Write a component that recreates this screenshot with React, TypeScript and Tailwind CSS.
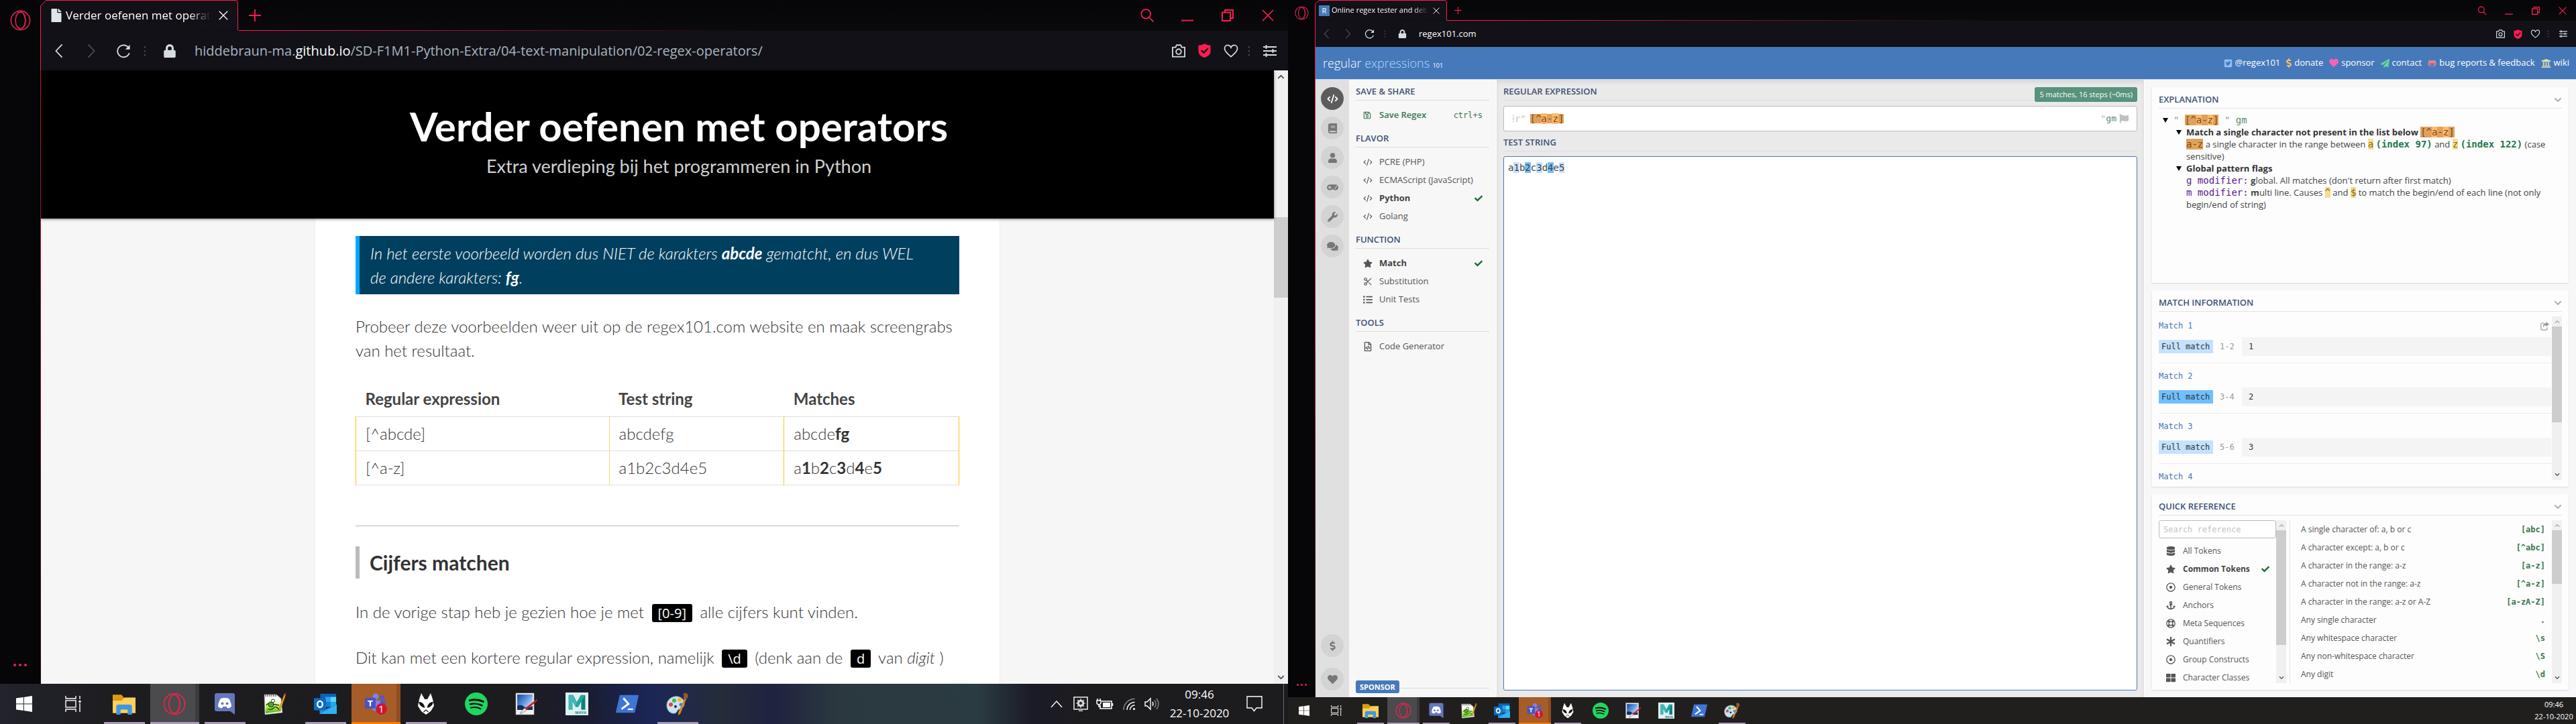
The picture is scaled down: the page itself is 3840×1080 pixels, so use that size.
import type { ReactNode } from "react";
import { CodeXml, Scissors } from "lucide-react";
import {
  FaAnchor,
  FaAsterisk,
  FaBook,
  FaCheck,
  FaChevronDown,
  FaComments,
  FaDatabase,
  FaDollarSign,
  FaFile,
  FaFlag,
  FaGamepad,
  FaGithubAlt,
  FaHeart,
  FaListUl,
  FaLock,
  FaPaperPlane,
  FaRegDotCircle,
  FaRegFileCode,
  FaRegLifeRing,
  FaRegSave,
  FaStar,
  FaThLarge,
  FaTwitterSquare,
  FaUniversity,
  FaUser,
  FaWrench,
} from "react-icons/fa";

/* ------------------------------------------------------------------ */
/* Icons                                                               */
/* ------------------------------------------------------------------ */

type IconProps = { className?: string };

function OperaIcon({ className = "" }: IconProps) {
  return (
    <svg viewBox="0 0 32 32" className={className} fill="none" stroke="#e3264f" strokeWidth="1.6">
      <circle cx="16" cy="16" r="14.6" />
      <ellipse cx="16" cy="16" rx="7.6" ry="12.8" />
      <path d="M19 4.2c6 4.5 6 19 0 23.6" />
    </svg>
  );
}

function SearchIcon({ className = "" }: IconProps) {
  return (
    <svg viewBox="0 0 24 24" className={className} fill="none" stroke="currentColor" strokeWidth="1.9">
      <circle cx="10" cy="9.5" r="7.5" />
      <path d="M15 15l7.5 7.5" />
    </svg>
  );
}

function MinimizeIcon({ className = "" }: IconProps) {
  return (
    <svg viewBox="0 0 18 18" className={className}>
      <rect x="0" y="15.6" width="18" height="1.9" fill="currentColor" />
    </svg>
  );
}

function RestoreIcon({ className = "" }: IconProps) {
  return (
    <svg viewBox="0 0 18 18" className={className} fill="none" stroke="currentColor" strokeWidth="2">
      <rect x="1" y="4.5" width="12" height="12.5" />
      <path d="M5 4.5V1h12v12h-4" />
    </svg>
  );
}

function CrossIcon({ className = "" }: IconProps) {
  return (
    <svg viewBox="0 0 18 18" className={className} fill="none" stroke="currentColor" strokeWidth="1.7">
      <path d="M1 1l16 16M17 1L1 17" />
    </svg>
  );
}

function PlusIcon({ className = "" }: IconProps) {
  return (
    <svg viewBox="0 0 18 18" className={className} fill="none" stroke="currentColor" strokeWidth="1.8">
      <path d="M9 0v18M0 9h18" />
    </svg>
  );
}

function BackIcon({ className = "" }: IconProps) {
  return (
    <svg viewBox="0 0 24 24" className={className} fill="none" stroke="currentColor" strokeWidth="1.9">
      <path d="M17 1.5L7 12l10 10.5" />
    </svg>
  );
}

function ForwardIcon({ className = "" }: IconProps) {
  return (
    <svg viewBox="0 0 24 24" className={className} fill="none" stroke="currentColor" strokeWidth="1.9">
      <path d="M7 1.5L17 12 7 22.5" />
    </svg>
  );
}

function ReloadIcon({ className = "" }: IconProps) {
  return (
    <svg viewBox="0 0 24 24" className={className} fill="none" stroke="currentColor" strokeWidth="2">
      <path d="M21.5 15.5A9.8 9.8 0 1 1 19 5.2L21 8" />
      <path d="M22.5 2v7.5H15z" fill="currentColor" stroke="none" />
    </svg>
  );
}

function DotsIcon({ className = "" }: IconProps) {
  return (
    <svg viewBox="0 0 4 16" className={className} fill="#4a4a52">
      <rect x="1" y="1" width="2" height="2.4" />
      <rect x="1" y="7" width="2" height="2.4" />
      <rect x="1" y="13" width="2" height="2.4" />
    </svg>
  );
}

function CameraIcon({ className = "" }: IconProps) {
  return (
    <svg viewBox="0 0 24 22" className={className} fill="none" stroke="currentColor" strokeWidth="2">
      <path d="M2 5h5l1.5-3.6h7L17 5h5v15.5H2z" strokeLinejoin="round" />
      <circle cx="12" cy="12.2" r="4.2" />
    </svg>
  );
}

function ShieldIcon({ className = "" }: IconProps) {
  return (
    <svg viewBox="0 0 20 22" className={className}>
      <path d="M10 0c2.5 2 6 2.7 9.5 2.7V12c0 5.5-5 8.5-9.5 10C5.5 20.5.5 17.5.5 12V2.7C4 2.700 7.5 2 10 0z" fill="#fa1e4e" />
      <path d="M5 10.500l3.800 3.800L15.500 7.500" fill="none" stroke="#121118" strokeWidth="2.4" />
    </svg>
  );
}

function HeartIcon({ className = "" }: IconProps) {
  return (
    <svg viewBox="0 0 24 22" className={className} fill="none" stroke="currentColor" strokeWidth="1.9">
      <path d="M12 20.5C7 16.500 1.500 12 1.500 7c0-3.300 2.300-5.500 5-5.500 2.500 0 4.500 1.500 5.500 4 1-2.500 3-4 5.500-4 2.700 0 5 2.200 5 5.500 0 5-5.500 9.500-10.500 13.500z" />
    </svg>
  );
}

function SlidersIcon({ className = "" }: IconProps) {
  return (
    <svg viewBox="0 0 20 18" className={className} fill="none" stroke="currentColor" strokeWidth="1.9">
      <path d="M0 3h20M0 9h20M0 15h20M4.500 0v6M14.500 6v6M4.500 12v6" />
    </svg>
  );
}

function ShareIcon({ className = "" }: IconProps) {
  return (
    <svg viewBox="0 0 16 16" className={className} fill="none" stroke="currentColor" strokeWidth="1.4">
      <path d="M7 2.500H3q-2 0-2 2V13q0 2 2 2h7.500q2 0 2-2v-2.500" />
      <path d="M10 0l6 4.500L10 9V6.500Q6 6 5 11 3.500 3 10 2.700z" fill="currentColor" stroke="none" />
    </svg>
  );
}

function TriangleIcon() {
  return (
    <svg viewBox="0 0 8 8" className="h-[18px] w-2 shrink-0">
      <path d="M0 1h8L4 8z" fill="#000" />
    </svg>
  );
}

function WindowsIcon({ className = "" }: IconProps) {
  return (
    <svg viewBox="0 0 24 24" className={className} fill="#fff">
      <path d="M0 3.500L10.800 2v9.500H0zM11.800 1.900L24 0v11.500H11.800zM0 12.500h10.800V22L0 20.500zM11.800 12.500H24V24l-12.200-1.900z" />
    </svg>
  );
}

function TaskViewIcon({ className = "" }: IconProps) {
  return (
    <svg viewBox="0 0 24 24" className={className} fill="none" stroke="#fff" strokeWidth="1.4">
      <path d="M1 0v4h15V0M1 24v-4h15v4M22 0v5M22 11v13" />
      <rect x="1" y="7" width="15" height="10" />
      <rect x="20.500" y="7" width="3" height="3" fill="#fff" stroke="none" />
    </svg>
  );
}

function FolderIcon({ className = "" }: IconProps) {
  return (
    <svg viewBox="0 0 32 32" className={className}>
      <path d="M0 3h12l3 3v5H0z" fill="#e09a0c" />
      <path d="M0 11h13l3-4h16v22H0z" fill="#ffd158" />
      <path d="M5 31V20q0-3 3-3h16q3 0 3 3v11h-6v-6q0-1-1-1h-8q-1 0-1 1v6z" fill="#3d97e4" />
    </svg>
  );
}

function DiscordIcon({ className = "" }: IconProps) {
  return (
    <svg viewBox="0 0 32 34" className={className}>
      <path d="M4 1h24q3 0 3 3v29l-7-5H4q-3 0-3-3V4q0-3 3-3z" fill="#6576c0" />
      <path d="M10 9q6-2 12 0 4 6 4 12-3 2.500-6 2.500L18.500 21h-5L12 23.500q-3 0-6-2.500 0-6 4-12z" fill="#fff" />
      <circle cx="12.500" cy="16.500" r="2" fill="#6576c0" />
      <circle cx="19.500" cy="16.500" r="2" fill="#6576c0" />
    </svg>
  );
}

function NotepadIcon({ className = "" }: IconProps) {
  return (
    <svg viewBox="0 0 34 34" className={className}>
      <defs>
        <linearGradient id="npGreen" x1="0" y1="0" x2="0" y2="1">
          <stop offset="0.15" stopColor="#ffffff" />
          <stop offset="0.6" stopColor="#b7f04a" />
          <stop offset="1" stopColor="#3fae18" />
        </linearGradient>
      </defs>
      <path d="M1 3h18l7 6 2 21L2 33z" fill="#f4f4f0" stroke="#9a9a9a" strokeWidth="0.6" />
      <path d="M3 8h21l2 20L3 31z" fill="url(#npGreen)" />
      <path d="M3 3v3M6 3v3M9 3v3M12 3v3M15 3v3M18 3v3" stroke="#333" strokeWidth="1" />
      <path d="M4 19q3-4 7-2l6 1 6 1M6 24q5 3 9-1t8 3" fill="none" stroke="#1d3d12" strokeWidth="1.4" />
      <circle cx="11" cy="18" r="4" fill="#4fa82d" stroke="#1d3d12" strokeWidth="1" />
      <circle cx="14" cy="12.500" r="2.500" fill="#fff" stroke="#1d3d12" strokeWidth="1" />
      <path d="M31 2l2 1-8 23-2 2v-4z" fill="#f2b21f" stroke="#8a5a12" strokeWidth="0.6" />
      <path d="M31 1l2.500 1-1 3-2.500-1z" fill="#c2362c" />
    </svg>
  );
}

function OutlookIcon({ className = "" }: IconProps) {
  return (
    <svg viewBox="0 0 36 34" className={className}>
      <rect x="10" y="1" width="25" height="20" fill="#0a63b5" />
      <rect x="18" y="6" width="8" height="8" fill="#2aa5ea" />
      <rect x="26" y="6" width="9" height="8" fill="#5bd3fb" />
      <rect x="18" y="14" width="8" height="8" fill="#1180d3" />
      <rect x="26" y="14" width="9" height="8" fill="#2aa5ea" />
      <path d="M9 33V20l10 5 17-7v15z" fill="#1a8fe0" />
      <path d="M9 33l27-15v15z" fill="#34b0f3" />
      <rect x="0" y="8" width="19" height="19" rx="1" fill="#0f6cc0" />
      <ellipse cx="9.500" cy="17.500" rx="4" ry="4.800" fill="none" stroke="#fff" strokeWidth="2.4" />
    </svg>
  );
}

function TeamsIcon({ className = "" }: IconProps) {
  return (
    <svg viewBox="0 0 40 38" className={className}>
      <circle cx="20" cy="6" r="5.300" fill="#7b83eb" />
      <circle cx="31" cy="8" r="4" fill="#5059c9" />
      <path d="M13 13h15v11a8 8 0 0 1-15 3z" fill="#7b83eb" />
      <path d="M28 13h9v10q-2 5-9 5z" fill="#5059c9" />
      <rect x="1" y="8" width="19" height="19" rx="1.500" fill="#4b53bc" />
      <path d="M6 13h9v2.300h-3.200V23H9.200v-7.700H6z" fill="#fff" />
      <circle cx="30" cy="28" r="9.800" fill="#cf1534" />
      <text x="30" y="34" textAnchor="middle" fontFamily="Open Sans, sans-serif" fontSize="17" fill="#fff">
        1
      </text>
    </svg>
  );
}

function FoobarIcon({ className = "" }: IconProps) {
  return (
    <svg viewBox="0 0 26 34" className={className}>
      <path d="M6 1l5 9h4l5-9 3 9 2 10-5 8-7 5-7-5-5-8 2-10z" fill="#fff" />
      <path d="M2 14q8 0 9.500 9Q4 22 2 14zM24 14q-8 0-9.500 9Q22 22 24 14z" fill="#111" />
      <path d="M9.500 29l3.500-3 3.500 3" fill="none" stroke="#111" strokeWidth="1.2" />
    </svg>
  );
}

function SpotifyIcon({ className = "" }: IconProps) {
  return (
    <svg viewBox="0 0 36 36" className={className}>
      <circle cx="18" cy="18" r="18" fill="#1ed760" />
      <g fill="none" stroke="#101010" strokeLinecap="round">
        <path d="M7.500 12.500q11-3 21.500 2" strokeWidth="3.2" />
        <path d="M8.500 18.500q9.500-2.500 18.500 2" strokeWidth="2.6" />
        <path d="M9.500 24q8-2 15.500 1.800" strokeWidth="2.2" />
      </g>
    </svg>
  );
}

function PhotoIcon({ className = "" }: IconProps) {
  return (
    <svg viewBox="0 0 34 34" className={className}>
      <defs>
        <linearGradient id="photoSky" x1="0" y1="0" x2="1" y2="0.8">
          <stop offset="0" stopColor="#17459d" />
          <stop offset="0.5" stopColor="#5b93dc" />
          <stop offset="1" stopColor="#e2eefa" />
        </linearGradient>
      </defs>
      <rect x="1" y="1" width="27" height="32" fill="#f1f1f1" stroke="#aaa" strokeWidth="0.6" />
      <rect x="3" y="3" width="23" height="23" fill="url(#photoSky)" />
      <path d="M3 20q6-3 10 1t13-1v6H3z" fill="#152c5c" />
      <path d="M32 10l1.500 1.500L17 26l-3-2z" fill="#c21f26" />
      <path d="M14 23l3 3-4 3q-3 3-6 2 2-2 3-4z" fill="#e6e6e6" stroke="#555" strokeWidth="0.6" />
    </svg>
  );
}

function MayaIcon({ className = "" }: IconProps) {
  return (
    <svg viewBox="0 0 36 36" className={className}>
      <rect width="36" height="36" fill="#dff1ef" />
      <path d="M5 4h7l6 11 6-11h7v23h-6V14l-5 9h-4l-5-9v13H5z" fill="#21a3a0" />
      <path d="M5 4h7l6 11-2 8-5-9v13H5z" fill="#3fb9b5" />
      <path d="M31 4v23h-6V14z" fill="#147c7c" />
      <text x="24" y="34" textAnchor="middle" fontFamily="Open Sans, sans-serif" fontWeight="700" fontSize="6" fill="#138a88">
        MAYA
      </text>
    </svg>
  );
}

function PowerShellIcon({ className = "" }: IconProps) {
  return (
    <svg viewBox="0 0 36 30" className={className}>
      <path d="M7 1h28q1 0 1 1l-6 26q0 1-1 1H1q-1 0-1-1L6 2q0-1 1-1z" fill="#3f74d8" />
      <path d="M12 6l8 9-11 8" fill="none" stroke="#fff" strokeWidth="3" />
      <path d="M19 23.500h8" stroke="#fff" strokeWidth="2.500" />
    </svg>
  );
}

function PaintIcon({ className = "" }: IconProps) {
  return (
    <svg viewBox="0 0 34 34" className={className}>
      <path d="M13 6C5 7 0 14 1 21s6 11 12 10c4-1 3-5 6-6 5-1 9-4 8-10S20 5 13 6z" fill="#c7e3f3" stroke="#7fa8c4" strokeWidth="0.8" />
      <circle cx="7" cy="18" r="3" fill="#e2453a" />
      <circle cx="12" cy="12" r="3" fill="#4fb548" />
      <circle cx="20" cy="11" r="3" fill="#f3b52b" />
      <circle cx="22" cy="18" r="2.500" fill="#3e7fd9" />
      <circle cx="14" cy="21" r="2" fill="#1c2a3c" />
      <path d="M27 9l3 1-9 22-3 2v-4z" fill="#d98328" />
      <path d="M26 1q7-1 7 5l-3 5-4-2z" fill="#8a5b34" />
    </svg>
  );
}

/* ------------------------------------------------------------------ */
/* Browser window                                                      */
/* ------------------------------------------------------------------ */

function TabOutline({ big }: { big: boolean }) {
  return (
    <svg
      viewBox={big ? "0 0 296 46" : "0 0 197 31"}
      className="absolute inset-0 size-full"
      preserveAspectRatio="none"
      aria-hidden="true"
    >
      <path
        d={
          big
            ? "M0.500 46V9L8.500 0.500H291Q294.500 0.500 294.500 4V45.500"
            : "M0.500 31V6L6 0.500H193Q196 0.500 196.500 3V30.500"
        }
        fill="#121118"
        stroke="#fa1e4e"
        strokeWidth="1"
      />
    </svg>
  );
}

type BrowserProps = {
  big: boolean;
  title: string;
  favicon: ReactNode;
  address: ReactNode;
  canGoBack: boolean;
  children: ReactNode;
};

function BrowserWindow({ big, title, favicon, address, canGoBack, children }: BrowserProps) {
  const control = big ? "grid w-[60px] place-items-center" : "grid w-10 place-items-center";
  const nav = big ? "grid w-12 place-items-center" : "grid w-8 place-items-center";
  const tool = big ? "grid w-[39px] place-items-center" : "grid w-[26px] place-items-center";
  const dots = big ? "h-6 w-4" : "h-4 w-3";
  return (
    <section className="flex min-h-0 flex-1 bg-[#060608] font-['Open_Sans',sans-serif]">
      <nav
        aria-label="Browser sidebar"
        className={
          big
            ? "flex w-[60px] shrink-0 flex-col items-center justify-between pt-[15px] pb-[26px]"
            : "flex w-10 shrink-0 flex-col items-center justify-between pt-[9px] pb-[17px]"
        }
      >
        <button type="button" aria-label="Menu">
          <OperaIcon className={big ? "size-[31px]" : "size-[21px]"} />
        </button>
        <button type="button" aria-label="More" className={big ? "flex gap-1" : "flex gap-[3px]"}>
          {[0, 1, 2].map((i) => (
            <span key={i} className={big ? "size-1 rounded-full bg-[#e3264f]" : "size-[3px] rounded-full bg-[#e3264f]"} />
          ))}
        </button>
      </nav>
      <div className="flex min-w-0 flex-1 flex-col">
        <div
          className={
            big
              ? "flex h-[46px] shrink-0 bg-linear-to-b from-[#060608] to-[#0a0a0c]"
              : "flex h-[31px] shrink-0 bg-linear-to-b from-[#060608] to-[#0a0a0c]"
          }
        >
          <div className={big ? "relative flex w-[296px] items-center pr-[12px] pl-[14px]" : "relative flex w-[197px] items-center pr-2 pl-[6px]"}>
            <TabOutline big={big} />
            <span className="relative shrink-0">{favicon}</span>
            <span
              className={
                big
                  ? "relative ml-1 w-[216px] shrink-0 overflow-hidden text-[17px] whitespace-nowrap text-white [mask-image:linear-gradient(to_right,black_85%,transparent)]"
                  : "relative ml-[3px] w-[144px] shrink-0 overflow-hidden text-[11px] whitespace-nowrap text-white [mask-image:linear-gradient(to_right,black_85%,transparent)]"
              }
            >
              {title}
            </span>
            <button type="button" aria-label="Close tab" className={big ? "relative ml-3 text-white" : "relative ml-[7px] text-white"}>
              <CrossIcon className={big ? "size-[14px]" : "size-[10px]"} />
            </button>
          </div>
          <div className="relative flex flex-1 justify-between text-[#fa1e4e]">
            <span
              className={
                big
                  ? "absolute bottom-0 left-0 h-px w-[765px] bg-linear-to-r from-[#fa1e4e] to-transparent"
                  : "absolute bottom-0 left-0 h-px w-[825px] bg-linear-to-r from-[#fa1e4e] to-transparent"
              }
            />
            <button type="button" aria-label="New tab" className={big ? "grid w-12 place-items-center" : "grid w-8 place-items-center"}>
              <PlusIcon className={big ? "size-[18px]" : "size-[11px]"} />
            </button>
            <div className="flex">
              <button type="button" aria-label="Search in tabs" className={control}>
                <SearchIcon className={big ? "size-[22px]" : "size-[14px]"} />
              </button>
              <button type="button" aria-label="Minimize" className={control}>
                <MinimizeIcon className={big ? "size-[18px]" : "size-3"} />
              </button>
              <button type="button" aria-label="Restore" className={control}>
                <RestoreIcon className={big ? "size-[18px]" : "size-3"} />
              </button>
              <button type="button" aria-label="Close" className={control}>
                <CrossIcon className={big ? "size-[18px]" : "size-3"} />
              </button>
            </div>
          </div>
        </div>
        <div className="flex min-h-0 flex-1">
          <span className="w-px shrink-0 bg-linear-to-b from-[#fa1e4e] via-[#8c1736] to-[#2a0a14]" />
          <div className="flex min-w-0 flex-1 flex-col">
            <div
              className={
                big
                  ? "flex h-[59px] shrink-0 items-stretch bg-[#121118] pr-[5px] pl-[3px] text-[#d5dce2]"
                  : "flex h-[39px] shrink-0 items-stretch bg-[#121118] pr-[2px] text-[#d5dce2]"
              }
            >
              <button type="button" aria-label="Back" className={canGoBack ? nav : nav + " text-[#4c4c54]"}>
                <BackIcon className={big ? "size-[22px]" : "size-[15px]"} />
              </button>
              <button type="button" aria-label="Forward" className={nav + " text-[#4c4c54]"}>
                <ForwardIcon className={big ? "size-[22px]" : "size-[15px]"} />
              </button>
              <button type="button" aria-label="Reload" className={nav}>
                <ReloadIcon className={big ? "size-[22px]" : "size-[15px]"} />
              </button>
              <span className={big ? "grid w-4 place-items-center" : "grid w-[14px] place-items-center"}>
                <DotsIcon className={big ? "h-4 w-1" : "h-[11px] w-[3px]"} />
              </span>
              <span className={big ? "grid w-[58px] place-items-center" : "grid w-[38px] place-items-center"}>
                <FaLock className={big ? "size-[20px]" : "size-[13px]"} />
              </span>
              <div className={big ? "flex flex-1 items-center pl-2 text-[20px] text-[#a9b5bf]" : "flex flex-1 items-center pl-[6px] text-[13px] text-[#a9b5bf]"}>
                <span>{address}</span>
              </div>
              <button type="button" aria-label="Snapshot" className={tool}>
                <CameraIcon className={big ? "h-5 w-[22px]" : "h-[13px] w-[15px]"} />
              </button>
              <button type="button" aria-label="Ad blocker" className={tool}>
                <ShieldIcon className={big ? "h-[21px] w-[19px]" : "h-[14px] w-[13px]"} />
              </button>
              <button type="button" aria-label="Bookmark" className={tool}>
                <HeartIcon className={big ? "h-5 w-[22px]" : "h-[13px] w-[15px]"} />
              </button>
              <span className={dots + " grid place-items-center self-center"}>
                <DotsIcon className={big ? "h-4 w-1" : "h-[11px] w-[3px]"} />
              </span>
              <button type="button" aria-label="Easy setup" className={big ? "grid w-[45px] place-items-center" : "grid w-[34px] place-items-center"}>
                <SlidersIcon className={big ? "h-[18px] w-5" : "h-[11px] w-3"} />
              </button>
            </div>
            {children}
          </div>
        </div>
      </div>
    </section>
  );
}

type ScrollbarProps = { width: string; lead: string; thumb: string; size: string; faded?: boolean };

function Scrollbar({ width, lead, thumb, size, faded = false }: ScrollbarProps) {
  return (
    <div aria-hidden="true" className={"flex shrink-0 flex-col items-center bg-[#f0f0f0] " + width}>
      <span className={"grid w-full shrink-0 place-items-center " + lead}>
        <FaChevronDown className={(faded ? "mt-1 rotate-180 self-start text-[#a8a8a8] " : "mt-1 rotate-180 self-start text-[#505050] ") + size} />
      </span>
      <span className={"w-full shrink-0 bg-[#cdcdcd] " + thumb} />
      <span className="flex-1" />
      <FaChevronDown className={"mb-1 shrink-0 text-[#505050] " + size} />
    </div>
  );
}

/* ------------------------------------------------------------------ */
/* Lesson page                                                         */
/* ------------------------------------------------------------------ */

function Code({ children }: { children: ReactNode }) {
  return (
    <code className="mx-[5px] rounded-[3px] bg-black px-[9px] font-['Open_Sans',sans-serif] text-[20px] leading-none font-normal text-white">
      {children}
    </code>
  );
}

function LessonPage() {
  const th = "h-[51px] px-[14px] text-left font-bold";
  return (
    <div className="flex min-h-0 flex-1 bg-[#f6f6f6] font-[Lato,sans-serif] text-[#333]">
      <div className="flex min-w-0 flex-1 flex-col">
        <header className="relative flex h-[221px] shrink-0 flex-col items-center bg-black pt-[43px] pl-16 shadow-[0_1px_4px_rgba(0,0,0,0.5)]">
          <h1 className="text-[60px] leading-[80px] font-bold text-white">Verder oefenen met operators</h1>
          <p className="text-[27px] leading-[40px] text-[#d0d0d0]">Extra verdieping bij het programmeren in Python</p>
        </header>
        <main className="min-h-0 flex-1 overflow-hidden">
          <article className="mx-auto min-h-full w-full max-w-[1022px] border-x border-[#eee] bg-white px-[60px] pt-[26px] text-[24px] leading-[36px] font-light">
            <blockquote className="border-l-[6px] border-[#00a8ff] bg-[#003f5e] px-4 pt-2 pb-[7px] text-white italic">
              In het eerste voorbeeld worden dus NIET de karakters <strong className="font-bold">abcde</strong> gematcht, en dus WEL
              <br />
              de andere karakters: <strong className="font-bold">fg</strong>.
            </blockquote>
            <p className="mt-[30px]">
              Probeer deze voorbeelden weer uit op de regex101.com website en maak screengrabs van het resultaat.
            </p>
            <table className="mt-[29px] w-full table-fixed border-collapse">
              <colgroup>
                <col className="w-[42%]" />
                <col className="w-[29%]" />
                <col className="w-[29%]" />
              </colgroup>
              <thead>
                <tr className="text-[#444]">
                  <th className={th}>Regular expression</th>
                  <th className={th}>Test string</th>
                  <th className={th}>Matches</th>
                </tr>
              </thead>
              <tbody>
                <tr className="h-[51px] border-y border-[#ddd]">
                  <td className="border-x border-l-[#f7c81e] border-r-[#f7d96a] px-[14px]">[^abcde]</td>
                  <td className="border-r border-[#f7c81e] px-[14px]">abcdefg</td>
                  <td className="border-r border-[#f7c81e] px-[14px]">
                    abcde<strong className="font-bold">fg</strong>
                  </td>
                </tr>
                <tr className="h-[51px] border-y border-[#ddd]">
                  <td className="border-x border-l-[#f7c81e] border-r-[#f7d96a] px-[14px]">[^a-z]</td>
                  <td className="border-r border-[#f7c81e] px-[14px]">a1b2c3d4e5</td>
                  <td className="border-r border-[#f7c81e] px-[14px]">
                    a<strong className="font-bold">1</strong>b<strong className="font-bold">2</strong>c
                    <strong className="font-bold">3</strong>d<strong className="font-bold">4</strong>e
                    <strong className="font-bold">5</strong>
                  </td>
                </tr>
              </tbody>
            </table>
            <hr className="mt-[60px] border-[#bbb]" />
            <h2 className="mt-[30px] border-l-[6px] border-[#bbb] pl-[15px] text-[30px] leading-[48px] font-bold">Cijfers matchen</h2>
            <p className="mt-8">
              In de vorige stap heb je gezien hoe je met <Code>[0-9]</Code> alle cijfers kunt vinden.
            </p>
            <p className="mt-8">
              Dit kan met een kortere regular expression, namelijk <Code>\d</Code> (denk aan de <Code>d</Code> van <em>digit</em> )
            </p>
          </article>
        </main>
      </div>
      <Scrollbar width="w-[21px]" lead="h-[219px]" thumb="h-[120px]" size="size-[11px]" />
    </div>
  );
}

/* ------------------------------------------------------------------ */
/* Regex tester page                                                   */
/* ------------------------------------------------------------------ */

const mono = "font-['DejaVu_Sans_Mono',monospace]";

function PanelTitle({ children }: { children: ReactNode }) {
  return (
    <h2 className="flex h-[25px] items-center border-b border-[#dcdcdc] text-[13px] font-semibold text-[#3b5173]">
      {children}
    </h2>
  );
}

function CharClass() {
  return (
    <code className={"bg-[#e1a05c] text-[14px] leading-none font-normal text-[#7a4a10] " + mono}>
      [^<span className="bg-[#ffbb70]">a</span>-<span className="bg-[#ffbb70]">z</span>]
    </code>
  );
}

function RailButton({ label, active = false, children }: { label: string; active?: boolean; children: ReactNode }) {
  return (
    <button
      type="button"
      aria-label={label}
      className={
        active
          ? "grid size-[34px] place-items-center rounded-full bg-[#5c5c5c] text-[16px] text-white"
          : "grid size-[34px] place-items-center rounded-full bg-[#d3d3d3] text-[15px] text-[#777]"
      }
    >
      {children}
    </button>
  );
}

type MenuItem = { icon: ReactNode; label: string; active?: boolean };

function MenuSection({ title, items }: { title: string; items: MenuItem[] }) {
  return (
    <section>
      <PanelTitle>{title}</PanelTitle>
      <ul className="pt-2 pb-[10px]">
        {items.map((item) => (
          <li key={item.label}>
            <button type="button" className="flex h-[27px] w-full items-center pr-[10px] pl-[11px] text-[13px] text-[#555]">
              <span className="w-6 text-[14px]">{item.icon}</span>
              <span className={item.active ? "font-bold text-[#444]" : ""}>{item.label}</span>
              {item.active && <FaCheck className="ml-auto size-3 text-[#1f6b3a]" />}
            </button>
          </li>
        ))}
      </ul>
    </section>
  );
}

const codeIcon = <CodeXml className="size-[14px]" strokeWidth={2} />;

const flavors: MenuItem[] = [
  { icon: codeIcon, label: "PCRE (PHP)" },
  { icon: codeIcon, label: "ECMAScript (JavaScript)" },
  { icon: codeIcon, label: "Python", active: true },
  { icon: codeIcon, label: "Golang" },
];

const functions: MenuItem[] = [
  { icon: <FaStar />, label: "Match", active: true },
  { icon: <Scissors className="size-[14px]" strokeWidth={2} />, label: "Substitution" },
  { icon: <FaListUl />, label: "Unit Tests" },
];

const tokens: MenuItem[] = [
  { icon: <FaDatabase />, label: "All Tokens" },
  { icon: <FaStar />, label: "Common Tokens", active: true },
  { icon: <FaRegDotCircle />, label: "General Tokens" },
  { icon: <FaAnchor />, label: "Anchors" },
  { icon: <FaRegLifeRing />, label: "Meta Sequences" },
  { icon: <FaAsterisk />, label: "Quantifiers" },
  { icon: <FaRegDotCircle />, label: "Group Constructs" },
  { icon: <FaThLarge />, label: "Character Classes" },
];

const reference = [
  ["A single character of: a, b or c", "[abc]"],
  ["A character except: a, b or c", "[^abc]"],
  ["A character in the range: a-z", "[a-z]"],
  ["A character not in the range: a-z", "[^a-z]"],
  ["A character in the range: a-z or A-Z", "[a-zA-Z]"],
  ["Any single character", "."],
  ["Any whitespace character", "\\s"],
  ["Any non-whitespace character", "\\S"],
  ["Any digit", "\\d"],
];

const matches = [
  { id: 1, range: "1-2", value: "1", strong: false },
  { id: 2, range: "3-4", value: "2", strong: true },
  { id: 3, range: "5-6", value: "3", strong: false },
];

function Card({ title, className = "", children }: { title: string; className?: string; children: ReactNode }) {
  return (
    <section className={"flex flex-col bg-[#fdfdfd] px-[10px] pt-[6px] shadow-[0_1px_2px_rgba(0,0,0,0.12)] " + className}>
      <h2 className="flex h-[26px] shrink-0 items-center justify-between border-b border-[#e2e2e2] text-[13px] font-semibold text-[#3b5173]">
        {title}
        <FaChevronDown className="size-3 text-[#aaa]" />
      </h2>
      {children}
    </section>
  );
}

function Literal({ children }: { children: ReactNode }) {
  return <code className={"bg-[#f5dd92] text-[14px] leading-none text-[#8a6a14] " + mono}>{children}</code>;
}

function Explanation() {
  const codeText = "text-[14px] leading-none " + mono;
  return (
    <Card title="EXPLANATION" className="h-[292px]">
      <div className="pt-2 text-[13px] leading-[18px] text-[#444]">
        <div className="flex items-center gap-2 pl-[6px]">
          <TriangleIcon />
          <span className={"text-[#999] " + codeText}>
            " <CharClass /> " <span className="text-[#5c8a72]">gm</span>
          </span>
        </div>
        <div className="flex gap-[7px] pl-[26px]">
          <TriangleIcon />
          <div>
            <p className="font-bold text-[#333]">
              Match a single character not present in the list below <CharClass />
            </p>
            <p>
              <code className={"bg-[#e1a05c] text-[#7a4a10] " + codeText}>a-z</code> a single character in the range between{" "}
              <Literal>a</Literal> <code className={"font-bold text-[#22774c] " + codeText}>(index 97)</code> and <Literal>z</Literal>{" "}
              <code className={"font-bold text-[#22774c] " + codeText}>(index 122)</code> (case sensitive)
            </p>
          </div>
        </div>
        <div className="flex gap-[7px] pl-[26px]">
          <TriangleIcon />
          <div>
            <p className="font-bold text-[#333]">Global pattern flags</p>
            <p>
              <code className={"text-[#551a8b] " + codeText}>g modifier:</code> <b>g</b>lobal. All matches (don't return after first match)
            </p>
            <p>
              <code className={"text-[#551a8b] " + codeText}>m modifier:</code> <b>m</b>ulti line. Causes <Literal>^</Literal> and{" "}
              <Literal>$</Literal> to match the begin/end of each line (not only begin/end of string)
            </p>
          </div>
        </div>
      </div>
    </Card>
  );
}

function MatchInformation() {
  return (
    <Card title="MATCH INFORMATION" className="h-[293px]">
      <div className={"mt-[7px] mb-[10px] flex min-h-0 flex-1 text-[12px] " + mono}>
        <div className="flex-1 overflow-hidden">
          {matches.map((m) => (
            <section key={m.id} className="mb-[5px] h-[70px] border-b border-[#ededed]">
              <h3 className="flex h-7 items-center justify-between pr-1 text-[#4679b8]">
                Match {m.id}
                {m.id === 1 && (
                  <button type="button" aria-label="Export matches">
                    <ShareIcon className="size-[13px] text-[#999]" />
                  </button>
                )}
              </h3>
              <div className="flex h-[34px] items-center">
                <span
                  className={
                    m.strong ? "w-[81px] bg-[#70bfff] pl-1 leading-5 text-[#333]" : "w-[81px] bg-[#c4e2ff] pl-1 leading-5 text-[#333]"
                  }
                >
                  Full match
                </span>
                <span className="w-[43px] pl-[10px] text-[#999]">{m.range}</span>
                <span className="mr-px flex h-7 flex-1 items-center rounded-[3px] bg-[#f4f4f4] pl-[10px] text-[#333]">{m.value}</span>
              </div>
            </section>
          ))}
          <h3 className="flex h-7 items-center text-[#4679b8]">Match 4</h3>
        </div>
        <Scrollbar width="w-[15px]" lead="h-[15px]" thumb="h-[143px]" size="size-2" faded />
      </div>
    </Card>
  );
}

function QuickReference() {
  return (
    <Card title="QUICK REFERENCE" className="min-h-0 flex-1">
      <div className="mt-[7px] mb-[10px] flex min-h-0 flex-1 text-[12px] text-[#555]">
        <div className="w-[175px] shrink-0 overflow-hidden">
          <input
            type="text"
            aria-label="Search reference"
            placeholder="Search reference"
            className={"h-[27px] w-full rounded-[3px] border border-[#bbb] bg-white px-[6px] text-[12px] placeholder:text-[#c4c4c4] " + mono}
          />
          <ul className="pt-[5px]">
            {tokens.map((t) => (
              <li key={t.label}>
                <button type="button" className="flex h-[27px] w-full items-center pr-[10px] pl-[11px]">
                  <span className="w-[25px] text-[14px] text-[#555]">{t.icon}</span>
                  <span className={t.active ? "font-bold text-[#444]" : ""}>{t.label}</span>
                  {t.active && <FaCheck className="ml-auto size-3 text-[#1f6b3a]" />}
                </button>
              </li>
            ))}
          </ul>
        </div>
        <Scrollbar width="w-[15px]" lead="h-[15px]" thumb="h-[171px]" size="size-2" faded />
        <ul className="ml-[5px] min-w-0 flex-1 overflow-hidden border-l border-[#e6e6e6] pr-[10px] pl-4">
          {reference.map(([label, token]) => (
            <li key={token} className="flex h-[27px] items-center justify-between">
              <span>{label}</span>
              <code className={"font-bold text-[#3a7550] " + mono}>{token}</code>
            </li>
          ))}
        </ul>
        <Scrollbar width="w-[15px]" lead="h-[15px]" thumb="h-[80px]" size="size-2" faded />
      </div>
    </Card>
  );
}

const headerLinks = [
  { icon: <FaTwitterSquare className="size-[13px] text-[#8fc2f5]" />, label: "@regex101" },
  { icon: <FaDollarSign className="h-[14px] w-2 text-[#f0bf6d]" />, label: "donate" },
  { icon: <FaHeart className="size-[14px] text-[#f562b5]" />, label: "sponsor" },
  { icon: <FaPaperPlane className="size-[13px] text-[#63dc93]" />, label: "contact" },
  { icon: <FaGithubAlt className="size-[13px] text-[#f37f82]" />, label: "bug reports & feedback" },
  { icon: <FaUniversity className="size-[15px] text-[#dfdda5]" />, label: "wiki" },
];

function RegexPage() {
  return (
    <div className="flex min-h-0 flex-1 flex-col bg-[#eaeaea]">
      <header className="relative flex h-[49px] shrink-0 items-center justify-between border-b border-[#cfe0f2] bg-[#4679ba] pr-[10px] pl-[11px]">
        <h1 className="text-[18px] font-light text-white">
          regular <span className="text-[#b0d8ff]">expressions</span> <span className="text-[9px] font-normal">101</span>
        </h1>
        <nav aria-label="Site" className="flex gap-[9px] text-[13px] text-white">
          {headerLinks.map((l) => (
            <a key={l.label} href="#" className="flex items-center gap-1">
              {l.icon}
              {l.label}
            </a>
          ))}
        </nav>
      </header>
      <div className="flex min-h-0 flex-1">
        <nav aria-label="Sections" className="flex w-[50px] shrink-0 flex-col items-center justify-between bg-[#e0e0e0] pt-[11px] pb-[10px]">
          <div className="flex flex-col gap-[10px]">
            <RailButton label="Editor" active>
              <CodeXml className="size-[17px]" strokeWidth={2.5} />
            </RailButton>
            <RailButton label="Library">
              <FaBook />
            </RailButton>
            <RailButton label="Account">
              <FaUser />
            </RailButton>
            <RailButton label="Quiz">
              <FaGamepad className="text-[17px]" />
            </RailButton>
            <RailButton label="Settings">
              <FaWrench />
            </RailButton>
            <RailButton label="Live help">
              <FaComments className="text-[17px]" />
            </RailButton>
          </div>
          <div className="flex flex-col gap-4">
            <RailButton label="Donate">
              <FaDollarSign />
            </RailButton>
            <RailButton label="Sponsor">
              <FaHeart />
            </RailButton>
          </div>
        </nav>
        <aside className="flex w-[220px] shrink-0 flex-col border-r border-white bg-[#f7f7f7] px-[10px] pt-[6px]">
          <section>
            <PanelTitle>SAVE &amp; SHARE</PanelTitle>
            <button type="button" className="mt-[9px] mb-[10px] flex h-[26px] w-full items-center pr-[10px] pl-[11px] text-[13px] text-[#3a7550]">
              <FaRegSave className="mr-3 size-3" />
              <span className="font-semibold">Save Regex</span>
              <span className={"ml-auto text-[12px] " + mono}>ctrl+s</span>
            </button>
          </section>
          <MenuSection title="FLAVOR" items={flavors} />
          <MenuSection title="FUNCTION" items={functions} />
          <MenuSection title="TOOLS" items={[{ icon: <FaRegFileCode />, label: "Code Generator" }]} />
          <span className="flex-1" />
          <div className="mb-[5px] bg-[linear-gradient(#dcdcdc,#dcdcdc)] bg-[length:100%_1px] bg-[position:0_15px] bg-no-repeat">
            <a href="#" className="inline-block rounded-[3px] bg-[#4679ba] px-[6px] text-[11px] leading-[19px] font-bold text-white">
              SPONSOR
            </a>
          </div>
        </aside>
        <main className="flex min-w-0 flex-1 flex-col bg-[#eaeaea] px-[10px] pt-[6px] pb-[10px] shadow-[inset_0_4px_6px_rgba(0,0,0,0.08)]">
          <div className="relative">
            <PanelTitle>REGULAR EXPRESSION</PanelTitle>
            <span className="absolute top-[5px] right-0 rounded-[3px] bg-[#57937d] px-[7px] text-[11px] leading-[22px] text-white">
              5 matches, 16 steps (~0ms)
            </span>
          </div>
          <div className={"mt-[8px] flex h-[38px] shrink-0 items-center rounded-[3px] border border-[#bbb] bg-white px-3 text-[14px] " + mono}>
            <span className="mr-[6px] text-[#c4c4c4]">⁞r"</span>
            <CharClass />
            <span className="ml-auto text-[#bbb]">"</span>
            <span className="text-[13px] text-[#5c8a72]">gm</span>
            <FaFlag className="ml-1 size-[14px] text-[#c0c0c0]" />
          </div>
          <div className="mt-[5px]">
            <PanelTitle>TEST STRING</PanelTitle>
          </div>
          <div
            role="textbox"
            aria-label="Test string"
            aria-multiline="true"
            className={"mt-[7px] flex-1 rounded-[3px] border border-[#4679ba] bg-white px-[6px] pt-[6px] text-[14px] leading-5 text-[#444] " + mono}
          >
            a<mark className="bg-[#c4e2ff] text-inherit">1</mark>b<mark className="bg-[#70bfff] text-inherit">2</mark>c
            <mark className="bg-[#c4e2ff] text-inherit">3</mark>d<mark className="bg-[#70bfff] text-inherit">4</mark>e
            <mark className="bg-[#c4e2ff] text-inherit">5</mark>
          </div>
        </main>
        <aside className="flex w-[644px] shrink-0 flex-col gap-[11px] border-l border-white bg-[#f7f7f7] px-[11px] pt-[11px] pb-[11px]">
          <Explanation />
          <MatchInformation />
          <QuickReference />
        </aside>
      </div>
    </div>
  );
}

/* ------------------------------------------------------------------ */
/* Taskbar                                                             */
/* ------------------------------------------------------------------ */

type App = {
  name: string;
  Icon: (p: IconProps) => ReactNode;
  state?: "open" | "active" | "alert";
};

const apps: App[] = [
  { name: "File Explorer", Icon: FolderIcon, state: "open" },
  { name: "Opera", Icon: OperaIcon, state: "active" },
  { name: "Discord", Icon: DiscordIcon, state: "open" },
  { name: "Notepad++", Icon: NotepadIcon },
  { name: "Outlook", Icon: OutlookIcon, state: "open" },
  { name: "Teams", Icon: TeamsIcon, state: "alert" },
  { name: "foobar2000", Icon: FoobarIcon, state: "open" },
  { name: "Spotify", Icon: SpotifyIcon },
  { name: "Photo viewer", Icon: PhotoIcon },
  { name: "Maya", Icon: MayaIcon },
  { name: "PowerShell", Icon: PowerShellIcon },
  { name: "Paint", Icon: PaintIcon, state: "open" },
];

function AppButton({ app, big }: { app: App; big: boolean }) {
  const { Icon, state } = app;
  const fill =
    state === "active" ? " bg-[#4b4a4c] border-r-[#3c3b3d]" : state === "alert" ? " bg-[#a65d27] border-r-[#8f4f22]" : " border-r-transparent";
  return (
    <button
      type="button"
      aria-label={app.name}
      className={
        (big
          ? "relative mr-[2px] grid w-[73px] place-items-center border-r-[6px] pl-[4px]"
          : "relative mr-px grid w-12 place-items-center border-r-[4px] pl-1") + fill
      }
    >
      <Icon className={big ? "size-[34px]" : "size-6"} />
      {state === "open" && (
        <span className={big ? "absolute bottom-0 left-[6px] h-[3px] w-[61px] bg-[#a89bb4]" : "absolute bottom-0 left-1 h-[2px] w-10 bg-[#a89bb4]"} />
      )}
      {state === "active" && (
        <span className={big ? "absolute bottom-0 left-0 h-[3px] w-[73px] bg-[#a89bb4]" : "absolute bottom-0 left-0 h-[2px] w-12 bg-[#a89bb4]"} />
      )}
      {state === "alert" && (
        <span className={big ? "absolute bottom-0 left-0 h-[3px] w-[73px] bg-[#ff7800]" : "absolute bottom-0 left-0 h-[2px] w-12 bg-[#ff7800]"} />
      )}
    </button>
  );
}

function SystemTray() {
  return (
    <div className="flex items-center text-white">
      <button type="button" aria-label="Show hidden icons" className="grid w-9 place-items-center">
        <svg viewBox="0 0 18 12" className="h-3 w-[18px]" fill="none" stroke="currentColor" strokeWidth="1.4">
          <path d="M1 11l8-9 8 9" />
        </svg>
      </button>
      <span className="grid w-9 place-items-center">
        <svg viewBox="0 0 22 22" className="size-[22px]" fill="none" stroke="#e4e4e4">
          <rect x="1" y="1" width="20" height="18" strokeWidth="1.6" />
          <circle cx="11" cy="10" r="4" strokeWidth="2.4" />
          <path d="M11 3v14M4 10h14M6 5l10 10M16 5L6 15" strokeWidth="1.2" />
          <circle cx="11" cy="10" r="2" fill="#222" stroke="none" />
          <path d="M8 21.500h6" strokeWidth="1.6" />
        </svg>
      </span>
      <span className="grid w-9 place-items-center">
        <svg viewBox="0 0 26 18" className="h-[18px] w-[26px]" fill="none" stroke="currentColor" strokeWidth="1.5">
          <path d="M8 5h15v11H6v-5M24.500 8v4" />
          <rect x="10" y="7" width="11" height="7" fill="currentColor" stroke="none" />
          <path d="M2 1v3M6 1v3M1 4h6v3q0 3-3 3t-3-3zM4 10v3h3" />
        </svg>
      </span>
      <span className="grid w-9 place-items-center">
        <svg viewBox="0 0 20 20" className="size-5" fill="none" stroke="currentColor" strokeWidth="1.5">
          <circle cx="17.500" cy="17.500" r="1.600" fill="currentColor" stroke="none" />
          <path d="M11.500 19a7 7 0 0 1 7-7M7 19A11.500 11.500 0 0 1 18.500 7.500" />
          <path d="M2 19A16.500 16.500 0 0 1 18.500 2.500" stroke="#888" />
        </svg>
      </span>
      <span className="grid w-8 place-items-center">
        <svg viewBox="0 0 22 20" className="h-5 w-[22px]" fill="none" stroke="currentColor" strokeWidth="1.4">
          <path d="M1 7h3l5-5v16l-5-5H1z" />
          <path d="M12 7q2 3 0 6" />
          <path d="M15 4.500q4 5.500 0 11M18 2q6 8 0 16" stroke="#888" />
        </svg>
      </span>
      <time className="w-[110px] text-center text-[17px] leading-[28px]">
        <span className="block">09:46</span>
        <span className="block">22-10-2020</span>
      </time>
      <button type="button" aria-label="Notifications" className="mr-[31px] ml-[15px]">
        <svg viewBox="0 0 24 24" className="size-6" fill="none" stroke="currentColor" strokeWidth="1.4">
          <path d="M1 1h22v17h-8l-3.500 4.500L8 18H1z" />
        </svg>
      </button>
      <span className="mr-[6px] h-full w-px bg-[#6a6a6c]" />
    </div>
  );
}

function Taskbar({ big }: { big: boolean }) {
  return (
    <footer
      className={
        big
          ? "flex h-[60px] shrink-0 justify-between bg-[linear-gradient(to_right,#22232b_0%,#1d1d1f_10%,#1c1c1e_40%,#1a1d33_46%,#1c2656_50.5%,#252c3a_56%,#1f2240_60%,#2b383f_65%,#2b3b42_76%,#1b1b26_80%,#1c1c1e_85%,#1c1c1e_100%)] font-['Open_Sans',sans-serif]"
          : "flex h-10 shrink-0 justify-between bg-[#211f1e] font-['Open_Sans',sans-serif]"
      }
    >
      <div className="flex">
        <button type="button" aria-label="Start" className={big ? "grid w-[72px] place-items-center" : "grid w-12 place-items-center"}>
          <WindowsIcon className={big ? "size-6" : "size-4"} />
        </button>
        <button type="button" aria-label="Task view" className={big ? "mr-[4px] grid w-[73px] place-items-center" : "mr-[3px] grid w-12 place-items-center"}>
          <TaskViewIcon className={big ? "size-6" : "size-4"} />
        </button>
        {apps.map((app) => (
          <AppButton key={app.name} app={app} big={big} />
        ))}
      </div>
      {big ? (
        <SystemTray />
      ) : (
        <time className="w-[66px] pt-[2px] text-center text-[11px] leading-[18px] text-white">
          <span className="block">09:46</span>
          <span className="block">22-10-2020</span>
        </time>
      )}
    </footer>
  );
}

/* ------------------------------------------------------------------ */
/* Desktop                                                             */
/* ------------------------------------------------------------------ */

export default function App() {
  return (
    <div className="flex h-screen overflow-hidden bg-black">
      <div className="flex min-w-0 flex-1 flex-col">
        <BrowserWindow
          big
          canGoBack
          title="Verder oefenen met operators"
          favicon={<FaFile className="size-5 text-[#dfe5ea]" />}
          address={
            <>
              hiddebraun-ma.<span className="text-white">github.io</span>/SD-F1M1-Python-Extra/04-text-manipulation/02-regex-operators/
            </>
          }
        >
          <LessonPage />
        </BrowserWindow>
        <Taskbar big />
      </div>
      <div className="flex min-w-0 flex-1 flex-col">
        <BrowserWindow
          big={false}
          canGoBack={false}
          title="Online regex tester and debugger"
          favicon={<span className="grid size-4 place-items-center bg-[#4679ba] text-[11px] text-white">R</span>}
          address={<span className="text-white">regex101.com</span>}
        >
          <RegexPage />
        </BrowserWindow>
        <Taskbar big={false} />
      </div>
    </div>
  );
}
